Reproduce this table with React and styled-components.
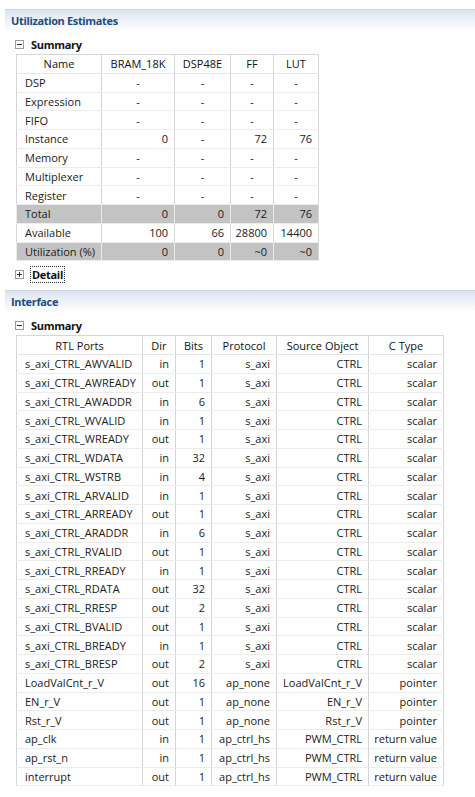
import React from 'react';
import styled, { createGlobalStyle } from 'styled-components';

const GlobalStyle = createGlobalStyle`
  html, body {
    margin: 0;
    padding: 0;
    background: #ffffff;
  }
  body {
    font-family: "Open Sans", "Noto Sans", Arial, sans-serif;
    font-size: 11px;
    color: #1a1a1a;
  }
`;

const Page = styled.div`
  width: 475px;
  padding-top: 9px;
  display: flex;
  flex-direction: column;
`;

const SectionBar = styled.div`
  margin-left: 5px;
  margin-top: ${(p) => p.$top || 0}px;
  height: 22px;
  border-top: 1px solid #cad6e2;
  background: linear-gradient(to bottom, #dbe5ef 0%, #eef3f8 55%, #ffffff 100%);
  display: flex;
  align-items: center;
  padding-left: 6px;
  box-sizing: border-box;
  font-weight: bold;
  font-size: 11px;
  letter-spacing: -0.35px;
  color: #254a7d;
`;

const SubHeader = styled.div`
  display: flex;
  align-items: center;
  gap: 7px;
  padding-left: 15px;
  height: 20px;
  margin-top: 3px;
  font-weight: bold;
  font-size: 11px;
  letter-spacing: -0.3px;
  color: #111;
`;

const Toggle = styled.span`
  width: 7px;
  height: 7px;
  border: 1px solid #9a9a9a;
  position: relative;
  background: #fff;
  &::before {
    content: '';
    position: absolute;
    left: 1px;
    right: 1px;
    top: 3px;
    height: 1px;
    background: #333;
  }
  &::after {
    content: '';
    display: ${(p) => (p.$plus ? 'block' : 'none')};
    position: absolute;
    top: 1px;
    bottom: 1px;
    left: 3px;
    width: 1px;
    background: #333;
  }
`;

const Focused = styled.span`
  outline: 1px dotted #333;
  padding: 0 1px;
`;

const Table = styled.table`
  margin-left: 16px;
  width: ${(p) => p.$width}px;
  border-collapse: collapse;
  border: 1px solid #d6d6d6;
  table-layout: fixed;
`;

const Th = styled.th`
  font-weight: normal;
  height: 17.75px;
  padding: 0;
  text-align: center;
  border-left: 1px solid #d6d6d6;
  border-bottom: 1px solid #e6e6e6;
  white-space: nowrap;
  color: #111;
`;

const Td = styled.td`
  height: 17.75px;
  padding: 0 ${(p) => (p.$align === 'left' ? 0 : 6)}px 0 ${(p) => (p.$align === 'left' ? 8 : 0)}px;
  text-align: ${(p) => p.$align || 'right'};
  border-left: 1px solid ${(p) => (p.$shade ? '#eaeaea' : '#d6d6d6')};
  border-bottom: 1px solid #ececec;
  background: ${(p) => (p.$shade ? '#c3c3c3' : '#ffffff')};
  white-space: nowrap;
  overflow: hidden;
`;

const DashTd = styled(Td)`
  text-align: center;
  padding: 0;
`;

const utilCols = [
  { name: 'Name', w: 85 },
  { name: 'BRAM_18K', w: 73 },
  { name: 'DSP48E', w: 56 },
  { name: 'FF', w: 43 },
  { name: 'LUT', w: 45 },
];

const utilRows = [
  ['DSP', '-', '-', '-', '-'],
  ['Expression', '-', '-', '-', '-'],
  ['FIFO', '-', '-', '-', '-'],
  ['Instance', '0', '-', '72', '76'],
  ['Memory', '-', '-', '-', '-'],
  ['Multiplexer', '-', '-', '-', '-'],
  ['Register', '-', '-', '-', '-'],
  ['Total', '0', '0', '72', '76', true],
  ['Available', '100', '66', '28800', '14400'],
  ['Utilization (%)', '0', '0', '~0', '~0', true],
];

const ifCols = [
  { name: 'RTL Ports', w: 126 },
  { name: 'Dir', w: 33 },
  { name: 'Bits', w: 36 },
  { name: 'Protocol', w: 65 },
  { name: 'Source Object', w: 92 },
  { name: 'C Type', w: 75 },
];

const ifRows = [
  ['s_axi_CTRL_AWVALID', 'in', '1', 's_axi', 'CTRL', 'scalar'],
  ['s_axi_CTRL_AWREADY', 'out', '1', 's_axi', 'CTRL', 'scalar'],
  ['s_axi_CTRL_AWADDR', 'in', '6', 's_axi', 'CTRL', 'scalar'],
  ['s_axi_CTRL_WVALID', 'in', '1', 's_axi', 'CTRL', 'scalar'],
  ['s_axi_CTRL_WREADY', 'out', '1', 's_axi', 'CTRL', 'scalar'],
  ['s_axi_CTRL_WDATA', 'in', '32', 's_axi', 'CTRL', 'scalar'],
  ['s_axi_CTRL_WSTRB', 'in', '4', 's_axi', 'CTRL', 'scalar'],
  ['s_axi_CTRL_ARVALID', 'in', '1', 's_axi', 'CTRL', 'scalar'],
  ['s_axi_CTRL_ARREADY', 'out', '1', 's_axi', 'CTRL', 'scalar'],
  ['s_axi_CTRL_ARADDR', 'in', '6', 's_axi', 'CTRL', 'scalar'],
  ['s_axi_CTRL_RVALID', 'out', '1', 's_axi', 'CTRL', 'scalar'],
  ['s_axi_CTRL_RREADY', 'in', '1', 's_axi', 'CTRL', 'scalar'],
  ['s_axi_CTRL_RDATA', 'out', '32', 's_axi', 'CTRL', 'scalar'],
  ['s_axi_CTRL_RRESP', 'out', '2', 's_axi', 'CTRL', 'scalar'],
  ['s_axi_CTRL_BVALID', 'out', '1', 's_axi', 'CTRL', 'scalar'],
  ['s_axi_CTRL_BREADY', 'in', '1', 's_axi', 'CTRL', 'scalar'],
  ['s_axi_CTRL_BRESP', 'out', '2', 's_axi', 'CTRL', 'scalar'],
  ['LoadValCnt_r_V', 'out', '16', 'ap_none', 'LoadValCnt_r_V', 'pointer'],
  ['EN_r_V', 'out', '1', 'ap_none', 'EN_r_V', 'pointer'],
  ['Rst_r_V', 'out', '1', 'ap_none', 'Rst_r_V', 'pointer'],
  ['ap_clk', 'in', '1', 'ap_ctrl_hs', 'PWM_CTRL', 'return value'],
  ['ap_rst_n', 'in', '1', 'ap_ctrl_hs', 'PWM_CTRL', 'return value'],
  ['interrupt', 'out', '1', 'ap_ctrl_hs', 'PWM_CTRL', 'return value'],
];

const Head = ({ cols }) => (
  <>
    <colgroup>
      {cols.map((c) => (
        <col key={c.name} style={{ width: c.w }} />
      ))}
    </colgroup>
    <thead>
      <tr>
        {cols.map((c) => (
          <Th key={c.name}>{c.name}</Th>
        ))}
      </tr>
    </thead>
  </>
);

const App = () => (
  <Page>
    <GlobalStyle />
    <SectionBar>Utilization Estimates</SectionBar>
    <SubHeader>
      <Toggle />
      Summary
    </SubHeader>
    <Table $width={302}>
      <Head cols={utilCols} />
      <tbody>
        {utilRows.map((r) => (
          <tr key={r[0]}>
            <Td $align="left" $shade={r[5]}>{r[0]}</Td>
            {r.slice(1, 5).map((v, i) =>
              v === '-' ? (
                <DashTd key={i}>{v}</DashTd>
              ) : (
                <Td key={i} $shade={r[5]}>{v}</Td>
              )
            )}
          </tr>
        ))}
      </tbody>
    </Table>
    <SubHeader>
      <Toggle $plus />
      <Focused>Detail</Focused>
    </SubHeader>
    <SectionBar $top={6}>Interface</SectionBar>
    <SubHeader>
      <Toggle />
      Summary
    </SubHeader>
    <Table $width={427}>
      <Head cols={ifCols} />
      <tbody>
        {ifRows.map((r) => (
          <tr key={r[0]}>
            <Td $align="left">{r[0]}</Td>
            {r.slice(1).map((v, i) => (
              <Td key={i}>{v}</Td>
            ))}
          </tr>
        ))}
      </tbody>
    </Table>
  </Page>
);

export default App;
